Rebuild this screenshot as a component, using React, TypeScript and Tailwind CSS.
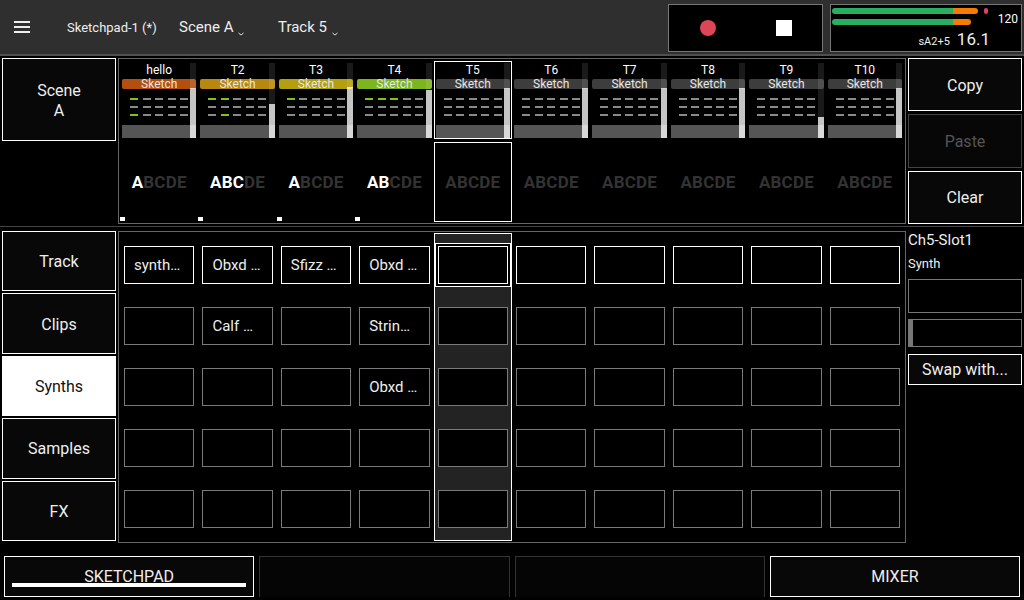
import React from 'react'

type TrackInfo = {
  name: string
  color: string
  dashes: number[][]
  vol: number
  lit: number
  mark: boolean
}

const empty = [[0, 0, 0, 0, 0], [0, 0, 0, 0, 0], [0, 0, 0, 0, 0]]

const tracks: TrackInfo[] = [
  { name: 'hello', color: '#b4500f', dashes: [[1, 0, 0, 0, 0], [0, 0, 0, 0, 0], [1, 0, 0, 0, 0]], vol: 50, lit: 1, mark: true },
  { name: 'T2', color: '#b8870d', dashes: [[1, 1, 0, 0, 0], [0, 0, 0, 0, 0], [0, 1, 0, 0, 0]], vol: 34, lit: 3, mark: true },
  { name: 'T3', color: '#b3a00e', dashes: [[1, 0, 0, 0, 0], [0, 0, 0, 0, 0], [0, 0, 0, 0, 0]], vol: 51, lit: 1, mark: true },
  { name: 'T4', color: '#7db51c', dashes: [[1, 1, 1, 0, 0], [0, 0, 0, 0, 0], [0, 0, 0, 0, 0]], vol: 48, lit: 2, mark: true },
  { name: 'T5', color: '#3d3d3d', dashes: empty, vol: 50, lit: 0, mark: false },
  { name: 'T6', color: '#3d3d3d', dashes: empty, vol: 50, lit: 0, mark: false },
  { name: 'T7', color: '#3d3d3d', dashes: empty, vol: 50, lit: 0, mark: false },
  { name: 'T8', color: '#3d3d3d', dashes: empty, vol: 50, lit: 0, mark: false },
  { name: 'T9', color: '#3d3d3d', dashes: empty, vol: 21, lit: 0, mark: false },
  { name: 'T10', color: '#3d3d3d', dashes: empty, vol: 50, lit: 0, mark: false },
]

const slots: string[][] = [
  ['synth…', 'Obxd …', 'Sfizz …', 'Obxd …', '', '', '', '', '', ''],
  ['', 'Calf …', '', 'Strin…', '', '', '', '', '', ''],
  ['', '', '', 'Obxd …', '', '', '', '', '', ''],
  ['', '', '', '', '', '', '', '', '', ''],
  ['', '', '', '', '', '', '', '', '', ''],
]

const SELECTED = 4

function Chevron() {
  return (
    <svg width="6" height="4" viewBox="0 0 6 4" className="ml-[5px] mt-[12px]">
      <path d="M0.5 1 L3 3 L5.5 1" stroke="#ddd" strokeWidth="1" fill="none" />
    </svg>
  )
}

function Header() {
  return (
    <div className="h-[56px] bg-[#2f2f2f] border-b-[2px] border-[#505050] flex items-center text-[#eee]">
      <div className="w-[67px] pl-[14px] flex flex-col gap-[3px]">
        <div className="w-[16px] h-[2px] bg-[#eee]" />
        <div className="w-[16px] h-[2px] bg-[#eee]" />
        <div className="w-[16px] h-[2px] bg-[#eee]" />
      </div>
      <div className="w-[112px] text-[13px] pt-[1px]">Sketchpad-1 (*)</div>
      <div className="w-[99px] flex items-center text-[15px] pt-[1px]">
        Scene A
        <Chevron />
      </div>
      <div className="flex items-center text-[15px] pt-[1px]">
        Track 5
        <Chevron />
      </div>
      <div className="ml-auto mr-[2px] flex gap-[7px] mt-[2px]">
        <div className="w-[155px] h-[48px] border border-[#777] bg-black flex items-center pl-[31px]">
          <div className="w-[16px] h-[16px] rounded-full bg-[#dc4656]" />
          <div className="ml-[60px] w-[16px] h-[16px] bg-white" />
        </div>
        <div className="w-[192px] h-[48px] border border-[#777] bg-black flex flex-col pl-[1px] pt-[3px]">
          <div className="flex items-start">
            <div className="flex flex-col gap-[5px]">
              <div className="flex items-center">
                <div className="w-[146px] h-[6px] rounded-full overflow-hidden flex">
                  <div className="w-[121px] bg-[#27ae60]" />
                  <div className="flex-1 bg-[#f57c00]" />
                </div>
                <div className="ml-[6px] w-[4px] h-[6px] rounded-full bg-[#e0405a]" />
              </div>
              <div className="w-[139px] h-[6px] rounded-full overflow-hidden flex">
                <div className="w-[121px] bg-[#27ae60]" />
                <div className="flex-1 bg-[#f57c00]" />
              </div>
            </div>
            <span className="ml-auto mr-[3px] mt-[5px] text-[12px] leading-none text-white">120</span>
          </div>
          <div className="mt-auto pb-[3px] pr-[31px] flex items-baseline justify-end">
            <span className="text-[11px] leading-none">sA2+5</span>
            <span className="ml-[7px] text-[17px] leading-none">16.1</span>
          </div>
        </div>
      </div>
    </div>
  )
}

function TrackHeader({ t, selected }: { t: TrackInfo; selected: boolean }) {
  return (
    <div className={`h-[78px] border px-[1px] ${selected ? 'border-white' : 'border-transparent'}`}>
      <div className="relative h-full flex flex-col">
        <div className="pt-[1px] h-[15px] text-[12px] leading-[14px] text-center text-white">{t.name}</div>
        <div
          className="mt-[2px] h-[10px] rounded-[2px] text-[12px] leading-[10px] text-center text-[#e6e6e6]"
          style={{ backgroundColor: t.color }}
        >
          Sketch
        </div>
        <div className="mt-[9px] pl-[8px] flex flex-col gap-[6px]">
          {t.dashes.map((row, i) => (
            <div key={i} className="flex gap-[4.5px]">
              {row.map((d, j) => (
                <div key={j} className={`w-[8px] h-[2px] ${d ? 'bg-[#7cc414]' : 'bg-[#8a8a8a]'}`} />
              ))}
            </div>
          ))}
        </div>
        <div className="mt-[9px] h-[13px] bg-[#555]" />
        <div className="absolute right-0 top-[1px] bottom-0 w-[6px] bg-white/10 flex flex-col justify-end">
          <div className="bg-white/75" style={{ height: t.vol }} />
        </div>
      </div>
    </div>
  )
}

function TrackClips({ t, selected }: { t: TrackInfo; selected: boolean }) {
  const letters = ['A', 'B', 'C', 'D', 'E']
  return (
    <div
      className={`relative h-[80px] border flex items-center justify-center ${selected ? 'border-white' : 'border-transparent'}`}
    >
      <div className="text-[17px] font-bold leading-none tracking-[0.2px]">
        {letters.map((l, i) => (
          <span key={l} className={i < t.lit ? 'text-white' : 'text-[#333]'}>
            {l}
          </span>
        ))}
      </div>
      {t.mark && <div className="absolute left-[-1px] bottom-0 w-[5px] h-[4px] bg-white" />}
    </div>
  )
}

function SideButton({ label, active, dim }: { label: React.ReactNode; active?: boolean; dim?: boolean }) {
  return (
    <div
      className={`flex-1 flex items-center justify-center text-center text-[16px] pt-[2px] border ${
        active
          ? 'bg-white text-[#111] border-white'
          : dim
            ? 'bg-[#070707] text-[#555] border-[#444]'
            : 'bg-[#080808] text-[#eee] border-white'
      }`}
    >
      {label}
    </div>
  )
}

export default function App() {
  return (
    <div
      className="w-[1024px] h-[600px] bg-black overflow-hidden flex flex-col text-[#eee]"
      style={{ fontFamily: 'Roboto, "Noto Sans", sans-serif' }}
    >
      <Header />

      {/* scene / tracks strip */}
      <div className="h-[170px] pt-[2px] pl-[2px] flex gap-[2px] items-start">
        <div className="w-[114px] h-[83px] flex">
          <SideButton label={<span className="leading-[20px]">Scene<br />A</span>} />
        </div>
        <div className="w-[788px] h-[166px] border border-[#666] px-[1px] pt-[2px] grid grid-cols-10">
          {tracks.map((t, i) => (
            <div key={t.name} className="flex flex-col gap-[3px]">
              <TrackHeader t={t} selected={i === SELECTED} />
              <TrackClips t={t} selected={i === SELECTED} />
            </div>
          ))}
        </div>
        <div className="w-[114px] h-[166px] flex flex-col gap-[3px]">
          <SideButton label="Copy" />
          <SideButton label="Paste" dim />
          <SideButton label="Clear" />
        </div>
      </div>

      <div className="h-[1px] bg-[#444]" />

      {/* slots area */}
      <div className="h-[329px] pt-[4px] pl-[2px] flex gap-[2px] items-start">
        <div className="w-[114px] h-[310px] flex flex-col gap-[2px]">
          <SideButton label="Track" />
          <SideButton label="Clips" />
          <SideButton label="Synths" active />
          <SideButton label="Samples" />
          <SideButton label="FX" />
        </div>
        <div className="w-[788px] h-[312px] border border-[#666] p-[1px] grid grid-cols-10">
          {tracks.map((t, c) => {
            const sel = c === SELECTED
            return (
              <div
                key={t.name}
                className={`border flex flex-col pt-[12px] gap-[23px] ${sel ? 'border-white bg-[#232323]' : 'border-transparent'}`}
              >
                {slots.map((row, r) => {
                  const text = row[c]
                  const isSelCell = sel && r === 0
                  return (
                    <div
                      key={r}
                      className={`mx-[3px] h-[38px] bg-black border flex items-center pl-[9px] pt-[1px] text-[15px] whitespace-nowrap overflow-hidden ${
                        r === 0 ? 'border-white' : 'border-[#7a7a7a]'
                      } ${isSelCell ? 'shadow-[0_0_0_2px_#000,0_0_0_3px_#fff]' : ''}`}
                    >
                      {text}
                    </div>
                  )
                })}
              </div>
            )
          })}
        </div>
        <div className="w-[114px] flex flex-col">
          <div className="text-[15px] leading-[18px] mt-[0px]">Ch5-Slot1</div>
          <div className="text-[13px] leading-[16px] mt-[7px]">Synth</div>
          <div className="mt-[7px] h-[34px] border border-[#777]" />
          <div className="mt-[6px] h-[28px] border border-[#777] flex">
            <div className="w-[4px] bg-[#777]" />
          </div>
          <div className="mt-[7px] h-[31px] border border-white bg-[#080808] flex items-center justify-center text-[16px] pt-[1px]">
            Swap with...
          </div>
        </div>
      </div>

      {/* bottom bar */}
      <div className="h-[44px] px-[4px] pb-[3px] grid grid-cols-4 gap-[5px]">
        <div className="relative border border-white bg-[#080808] flex items-center justify-center text-[16px] pt-[1px]">
          SKETCHPAD
          <div className="absolute left-[7px] right-[7px] bottom-[9px] h-[4px] bg-white" />
        </div>
        <div className="border border-[#333] border-b-0 bg-[#050505]" />
        <div className="border border-[#333] border-b-0 bg-[#050505]" />
        <div className="border border-white bg-[#080808] flex items-center justify-center text-[16px] pt-[1px]">MIXER</div>
      </div>
    </div>
  )
}
